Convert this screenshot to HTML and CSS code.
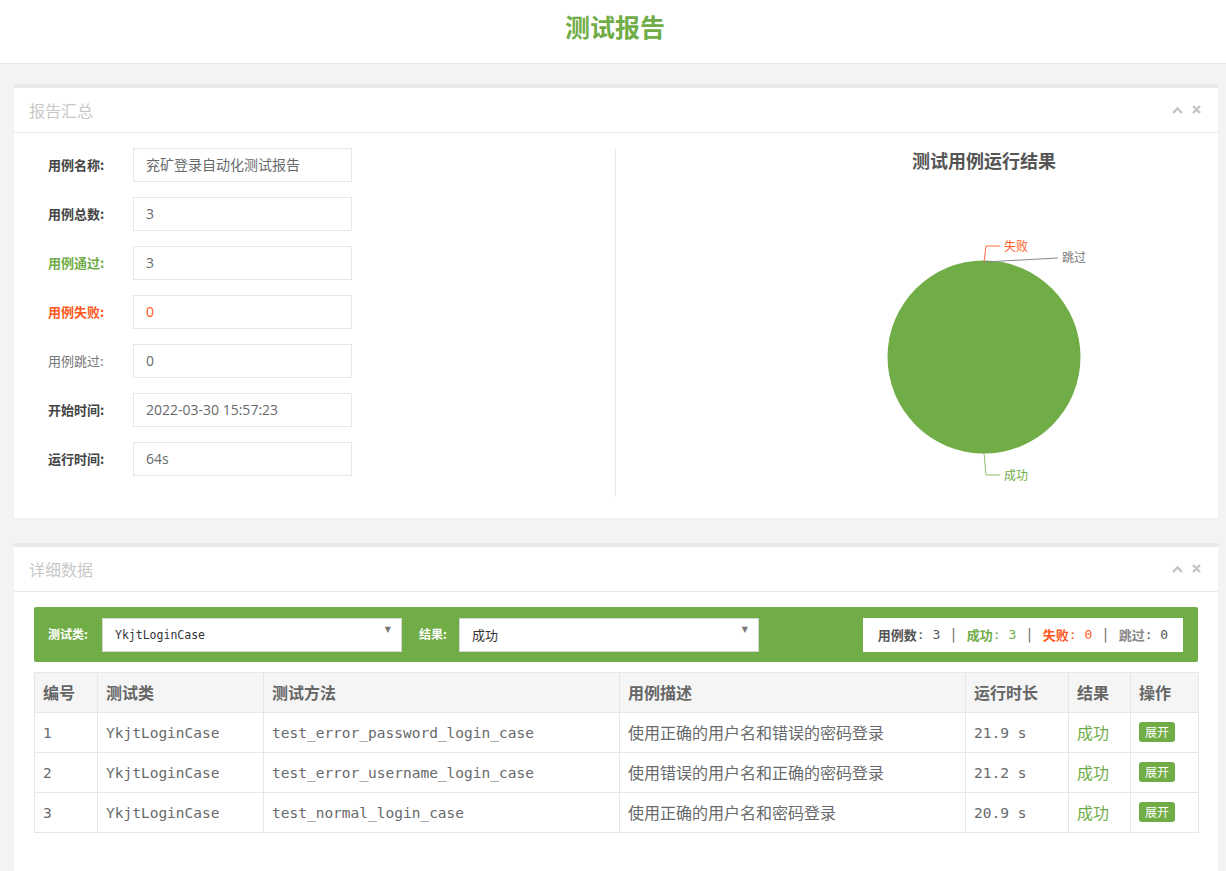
FILE: index.html
```html
<!DOCTYPE html>
<html lang="zh">
<head>
<meta charset="utf-8">
<title>测试报告</title>
<link rel="stylesheet" href="styles.css">
</head>
<body>
<header class="top">
  <h1 class="top-title">测试报告</h1>
</header>
<main class="wrap">
  <section class="panel">
    <div class="panel-head">
      <span class="panel-title">报告汇总</span>
      <span class="panel-tools">
        <svg width="11" height="8" viewBox="0 0 11 8"><path d="M1 7 L5.5 2.5 L10 7" fill="none" stroke="#c4c4c4" stroke-width="2.4"/></svg>
        <svg width="9" height="9" viewBox="0 0 9 9"><path d="M1 1 L8 8 M8 1 L1 8" fill="none" stroke="#c4c4c4" stroke-width="2.4"/></svg>
      </span>
    </div>
    <div class="panel-body summary">
      <div class="form-col">
        <div class="frow"><label class="flabel">用例名称:</label><div class="finput">兖矿登录自动化测试报告</div></div>
        <div class="frow"><label class="flabel">用例总数:</label><div class="finput">3</div></div>
        <div class="frow"><label class="flabel pass">用例通过:</label><div class="finput">3</div></div>
        <div class="frow"><label class="flabel fail">用例失败:</label><div class="finput fail-v">0</div></div>
        <div class="frow"><label class="flabel skip">用例跳过:</label><div class="finput">0</div></div>
        <div class="frow"><label class="flabel">开始时间:</label><div class="finput">2022-03-30 15:57:23</div></div>
        <div class="frow"><label class="flabel">运行时间:</label><div class="finput">64s</div></div>
      </div>
      <div class="chart-col">
        <svg class="chart" width="582" height="349" viewBox="0 0 582 349">
          <text class="chart-title" x="368" y="20" text-anchor="middle">测试用例运行结果</text>
          <circle cx="368" cy="209" r="96.5" fill="#70ad47"/>
          <polyline points="368,114 370,98 384,98" fill="none" stroke="#ff6a3d" stroke-width="1"/>
          <text class="lbl lbl-fail" x="388" y="103">失败</text>
          <polyline points="368,114 442,110" fill="none" stroke="#888" stroke-width="1"/>
          <text class="lbl lbl-skip" x="446" y="114">跳过</text>
          <polyline points="368,305 370,327 384,327" fill="none" stroke="#8cc06a" stroke-width="1"/>
          <text class="lbl lbl-pass" x="388" y="332">成功</text>
        </svg>
      </div>
    </div>
  </section>

  <section class="panel">
    <div class="panel-head">
      <span class="panel-title">详细数据</span>
      <span class="panel-tools">
        <svg width="11" height="8" viewBox="0 0 11 8"><path d="M1 7 L5.5 2.5 L10 7" fill="none" stroke="#c4c4c4" stroke-width="2.4"/></svg>
        <svg width="9" height="9" viewBox="0 0 9 9"><path d="M1 1 L8 8 M8 1 L1 8" fill="none" stroke="#c4c4c4" stroke-width="2.4"/></svg>
      </span>
    </div>
    <div class="panel-body detail">
      <div class="filter-bar">
        <span class="fb-label">测试类:</span>
        <div class="fb-select mono-s">YkjtLoginCase<span class="caret">▼</span></div>
        <span class="fb-label fb-label2">结果:</span>
        <div class="fb-select">成功<span class="caret">▼</span></div>
        <div class="stats">
          <b class="s-all">用例数</b><span class="m">: 3</span><span class="sep">|</span>
          <b class="s-pass">成功</b><span class="m s-pass">: 3</span><span class="sep">|</span>
          <b class="s-fail">失败</b><span class="m s-fail">: 0</span><span class="sep">|</span>
          <b class="s-skip">跳过</b><span class="m">: 0</span>
        </div>
      </div>
      <table class="grid">
        <colgroup>
          <col style="width:63px"><col style="width:166px"><col style="width:356px"><col style="width:346px"><col style="width:103px"><col style="width:62px"><col style="width:68px">
        </colgroup>
        <thead>
          <tr><th>编号</th><th>测试类</th><th>测试方法</th><th>用例描述</th><th>运行时长</th><th>结果</th><th>操作</th></tr>
        </thead>
        <tbody>
          <tr><td class="mono">1</td><td class="mono">YkjtLoginCase</td><td class="mono">test_error_password_login_case</td><td class="cjk">使用正确的用户名和错误的密码登录</td><td class="mono">21.9 s</td><td class="ok cjk">成功</td><td class="op"><span class="btn">展开</span></td></tr>
          <tr><td class="mono">2</td><td class="mono">YkjtLoginCase</td><td class="mono">test_error_username_login_case</td><td class="cjk">使用错误的用户名和正确的密码登录</td><td class="mono">21.2 s</td><td class="ok cjk">成功</td><td class="op"><span class="btn">展开</span></td></tr>
          <tr><td class="mono">3</td><td class="mono">YkjtLoginCase</td><td class="mono">test_normal_login_case</td><td class="cjk">使用正确的用户名和密码登录</td><td class="mono">20.9 s</td><td class="ok cjk">成功</td><td class="op"><span class="btn">展开</span></td></tr>
        </tbody>
      </table>
    </div>
  </section>
</main>
</body>
</html>
```
FILE: styles.css
```css
* { box-sizing: border-box; }
html, body { margin: 0; padding: 0; }
body {
  background: #f3f3f4;
  font-family: "Open Sans", "Noto Sans CJK SC", sans-serif;
  color: #676a6c;
  font-size: 13px;
}
.top {
  background: #fff;
  height: 64px;
  border-bottom: 1px solid #e7eaec;
  display: flex;
  justify-content: center;
}
.top-title {
  margin: 0;
  padding-top: 9px;
  padding-left: 4px;
  font-size: 25px;
  line-height: 34px;
  font-weight: bold;
  color: #70ad47;
  font-family: "Noto Sans CJK SC", sans-serif;
}
.wrap {
  padding: 20px 8px 0 14px;
  display: flex;
  flex-direction: column;
  gap: 25px;
}
.panel {
  background: #fff;
  border-top: 4px solid #e7eaec;
}
.panel-head {
  height: 45px;
  border-bottom: 1px solid #e7eaec;
  display: flex;
  align-items: center;
  justify-content: space-between;
  padding: 0 17px 0 15px;
}
.panel-title {
  font-family: "Noto Sans CJK SC", sans-serif;
  font-size: 16px;
  color: #c8c8c8;
}
.panel-tools {
  display: flex;
  gap: 9px;
  align-items: center;
  margin-top: -1px;
}
.panel-body { padding: 15px 20px 21px 20px; }
.summary { display: flex; }
.form-col {
  width: 582px;
  border-right: 1px solid #e7eaec;
  padding-left: 14px;
  display: flex;
  flex-direction: column;
  gap: 15px;
}
.frow { display: flex; align-items: center; height: 34px; }
.flabel {
  width: 85px;
  font-family: "Noto Sans CJK SC", sans-serif;
  font-weight: bold;
  font-size: 13px;
  color: #444;
  margin-top: -2px;
}
.flabel.pass { color: #70ad47; }
.flabel.fail { color: #ff5722; }
.flabel.skip { color: #777; font-weight: normal; }
.finput {
  width: 219px;
  height: 34px;
  border: 1px solid #e5e6e7;
  padding: 0 12px;
  font-size: 14px;
  line-height: 32px;
  color: #676a6c;
}
.finput.fail-v { color: #ff5722; }
.chart-col { flex: 1; }
.chart { display: block; }
.chart-title {
  font-family: "Noto Sans CJK SC", sans-serif;
  font-weight: bold;
  font-size: 18px;
  fill: #555;
}
.lbl { font-family: "Noto Sans CJK SC", sans-serif; font-size: 12px; }
.lbl-fail { fill: #ff5722; }
.lbl-skip { fill: #777; }
.lbl-pass { fill: #70ad47; }

.detail { padding-bottom: 40px; }
.filter-bar {
  background: #70ad47;
  border-radius: 2px;
  height: 55px;
  display: flex;
  align-items: center;
  padding: 0 15px 0 14px;
}
.fb-label {
  color: #fff;
  font-family: "Noto Sans CJK SC", sans-serif;
  font-weight: bold;
  font-size: 12px;
  width: 54px;
  margin-top: -2px;
}
.fb-label2 { width: 40px; margin-left: 17px; }
.fb-select {
  position: relative;
  width: 300px;
  height: 34px;
  background: #fff;
  border: 1px solid #d5d5d5;
  padding: 0 12px;
  line-height: 32px;
  font-size: 13px;
  color: #333;
  font-family: "Noto Sans CJK SC", sans-serif;
}
.fb-select.mono-s {
  font-family: "DejaVu Sans Mono", monospace;
  font-size: 11.5px;
}
.caret {
  position: absolute;
  right: 10px;
  top: -5px;
  font-size: 8px;
  color: #777;
  font-family: "DejaVu Sans", sans-serif;
}
.stats {
  margin-left: auto;
  width: 320px;
  height: 34px;
  background: #fff;
  display: flex;
  align-items: center;
  justify-content: center;
  font-size: 13px;
  color: #555;
  padding-bottom: 1px;
}
.stats b { font-family: "Noto Sans CJK SC", sans-serif; font-weight: bold; }
.stats .m { font-family: "DejaVu Sans Mono", monospace; font-size: 13px; white-space: pre; }
.stats .sep { margin: 0 9px; color: #777; font-family: "DejaVu Sans Mono", monospace; font-size: 14px; }
.s-all { color: #555; }
.s-pass { color: #70ad47; }
.s-fail { color: #ff5722; }
.s-skip { color: #888; }

.grid {
  margin-top: 10px;
  width: 1164px;
  table-layout: fixed;
  border-collapse: collapse;
  font-family: "Noto Sans CJK SC", sans-serif;
  font-size: 16px;
  color: #676a6c;
}
.grid th, .grid td {
  border: 1px solid #e7e7e7;
  padding: 0 8px;
  height: 40px;
  text-align: left;
  white-space: nowrap;
  overflow: hidden;
}
.grid th {
  background: #f5f5f5;
  font-weight: bold;
  color: #666;
  padding-bottom: 2px;
}
.grid td.cjk { padding-bottom: 2px; }
.grid td.mono {
  font-family: "DejaVu Sans Mono", monospace;
  font-size: 14.5px;
}
.grid td.ok { color: #70ad47; }
.grid td.op { line-height: 20px; padding-bottom: 1px; }
.btn {
  display: inline-block;
  background: #70ad47;
  color: #fff;
  font-size: 12px;
  line-height: 20px;
  height: 20px;
  padding: 0 6px;
  border-radius: 3px;
  vertical-align: top;
}
```
